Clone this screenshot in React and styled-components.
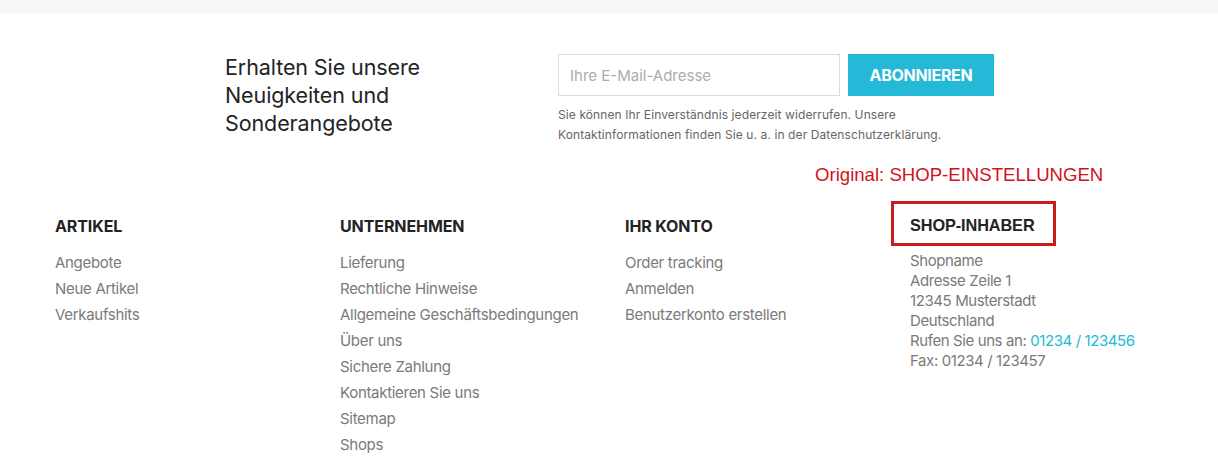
import React from "react";
import styled, { createGlobalStyle } from "styled-components";

const Global = createGlobalStyle`
  html, body { margin: 0; padding: 0; background: #fff; }
  body { font-family: Inter, "Noto Sans", sans-serif; color: #7a7a7a; }
  * { box-sizing: border-box; }
`;

const Page = styled.div`
  width: 1218px;
  height: 470px;
  overflow: hidden;
  background: #fff;
`;

const TopBar = styled.div`
  height: 13px;
  background: #f6f6f6;
`;

const Newsletter = styled.section`
  display: flex;
  align-items: flex-start;
  padding-left: 225px;
  margin-top: 40px;
`;

const NewsTitle = styled.h2`
  margin: 0;
  width: 333px;
  font-size: 21.5px;
  line-height: 28px;
  font-weight: 400;
  letter-spacing: -0.1px;
  color: #232323;
`;

const FormCol = styled.div`
  display: flex;
  flex-direction: column;
  padding-top: 1px;
`;

const FormRow = styled.div`
  display: flex;
  gap: 8px;
`;

const EmailInput = styled.input`
  width: 282px;
  height: 42px;
  border: 1px solid #dcdcdc;
  padding: 0 11px;
  font-family: inherit;
  font-size: 15px;
  color: #232323;
  outline: none;
  &::placeholder { color: #acacac; }
`;

const SubscribeButton = styled.button`
  width: 146px;
  height: 42px;
  border: 0;
  background: #24b9d7;
  color: #fff;
  font-family: inherit;
  font-weight: 700;
  font-size: 16px;
  letter-spacing: -0.3px;
  cursor: pointer;
`;

const Note = styled.p`
  margin: 9px 0 0;
  font-size: 12px;
  line-height: 20px;
  color: #666;
  letter-spacing: 0.1px;
`;

const Annotation = styled.div`
  margin-top: 20px;
  padding-left: 815px;
  height: 20px;
  font-family: "Liberation Sans", Arial, sans-serif;
  font-size: 18.6px;
  line-height: 20px;
  color: #d0131b;
`;

const Columns = styled.div`
  display: grid;
  grid-template-columns: repeat(4, 285px);
  padding-left: 55px;
  margin-top: 30px;
`;

const Column = styled.div`
  display: flex;
  flex-direction: column;
  align-items: flex-start;
`;

const ColTitle = styled.h4`
  margin: 0;
  font-size: 16px;
  line-height: 22px;
  font-weight: 700;
  color: #232323;
  letter-spacing: -0.1px;
  ${(p) =>
    p.$marked &&
    `
    font-family: "Liberation Sans", Arial, sans-serif;
    font-size: 16.3px;
    border: 3px solid #cc1a1a;
    padding: 10px 18px 7px 16px;
    margin: -14px -21px -9px -19px;
  `}
`;

const LinkList = styled.ul`
  list-style: none;
  margin: 13px 0 0;
  padding: 0;
`;

const LinkItem = styled.li`
  font-size: 15px;
  line-height: 26px;
  color: #7a7a7a;
  letter-spacing: -0.3px;
`;

const Address = styled.div`
  margin-top: 14px;
  font-size: 15px;
  line-height: 20px;
  color: #7a7a7a;
  letter-spacing: -0.4px;
`;

const Phone = styled.span`
  color: #24b9d7;
`;

const columns = [
  { title: "ARTIKEL", links: ["Angebote", "Neue Artikel", "Verkaufshits"] },
  {
    title: "UNTERNEHMEN",
    links: [
      "Lieferung",
      "Rechtliche Hinweise",
      "Allgemeine Geschäftsbedingungen",
      "Über uns",
      "Sichere Zahlung",
      "Kontaktieren Sie uns",
      "Sitemap",
      "Shops",
    ],
  },
  { title: "IHR KONTO", links: ["Order tracking", "Anmelden", "Benutzerkonto erstellen"] },
];

export default function App() {
  return (
    <Page>
      <Global />
      <TopBar />
      <Newsletter>
        <NewsTitle>
          Erhalten Sie unsere
          <br />
          Neuigkeiten und
          <br />
          Sonderangebote
        </NewsTitle>
        <FormCol>
          <FormRow>
            <EmailInput placeholder="Ihre E-Mail-Adresse" />
            <SubscribeButton>ABONNIEREN</SubscribeButton>
          </FormRow>
          <Note>
            Sie können Ihr Einverständnis jederzeit widerrufen. Unsere
            <br />
            Kontaktinformationen finden Sie u. a. in der Datenschutzerklärung.
          </Note>
        </FormCol>
      </Newsletter>
      <Annotation>Original: SHOP-EINSTELLUNGEN</Annotation>
      <Columns>
        {columns.map((c) => (
          <Column key={c.title}>
            <ColTitle>{c.title}</ColTitle>
            <LinkList>
              {c.links.map((l) => (
                <LinkItem key={l}>{l}</LinkItem>
              ))}
            </LinkList>
          </Column>
        ))}
        <Column>
          <ColTitle $marked>SHOP-INHABER</ColTitle>
          <Address>
            Shopname
            <br />
            Adresse Zeile 1
            <br />
            12345 Musterstadt
            <br />
            Deutschland
            <br />
            Rufen Sie uns an: <Phone>01234 / 123456</Phone>
            <br />
            Fax: 01234 / 123457
          </Address>
        </Column>
      </Columns>
    </Page>
  );
}
